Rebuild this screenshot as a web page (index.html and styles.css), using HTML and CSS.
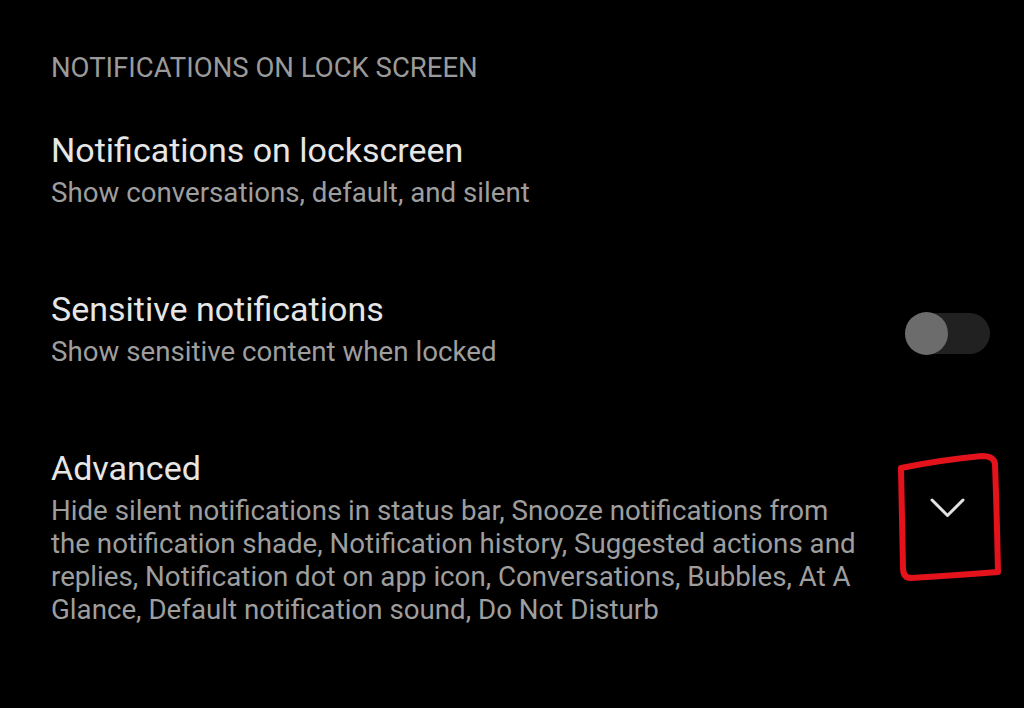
FILE: index.html
```html
<!DOCTYPE html>
<html lang="en">
<head>
    <meta charset="utf-8">
    <meta name="viewport" content="width=device-width, initial-scale=1.0">
    <title>Lock screen notifications</title>
    <link rel="stylesheet" href="styles.css">
</head>
<body>
    <div id="screen">
        <h2 class="category">NOTIFICATIONS ON LOCK SCREEN</h2>

        <div class="pref">
            <div class="text">
                <div class="title">Notifications on lockscreen</div>
                <div class="summary">Show conversations, default, and silent</div>
            </div>
        </div>

        <div class="pref">
            <div class="text">
                <div class="title">Sensitive notifications</div>
                <div class="summary">Show sensitive content when locked</div>
            </div>
            <div class="widget">
                <div class="switch">
                    <div class="thumb"></div>
                </div>
            </div>
        </div>

        <div class="pref">
            <div class="text">
                <div class="title">Advanced</div>
                <div class="summary">Hide silent notifications in status bar, Snooze notifications from the notification shade, Notification history, Suggested actions and replies, Notification dot on app icon, Conversations, Bubbles, At A Glance, Default notification sound, Do Not Disturb</div>
            </div>
            <div class="widget top">
                <svg class="chevron" width="37" height="22" viewBox="0 0 37 22">
                    <path d="M3 3 L18.5 18.5 L34 3" fill="none" stroke="#e2e2e2" stroke-width="3" stroke-linecap="round" stroke-linejoin="round"/>
                </svg>
            </div>
        </div>

        <!-- red marker drawn over the screenshot -->
        <svg class="marker" width="1024" height="708" viewBox="0 0 1024 708">
            <path d="M901 468 Q940 460 982 456 Q994 456 995 464 Q997 520 998 572 Q960 575 911 578 Q903 578 903 568 Q902 520 901 468"
                  fill="none" stroke="#e3121b" stroke-width="6" stroke-linecap="round" stroke-linejoin="round"/>
        </svg>
    </div>
</body>
</html>
```

FILE: styles.css
```css
body {
    margin: 0;
    background-color: #000;
    font-family: Roboto, "Noto Sans", sans-serif;
}
#screen {
    position: relative;
    width: 1024px;
    height: 708px;
    overflow: hidden;
    box-sizing: border-box;
    padding: 52px 34px 0 51px;
}
.category {
    margin: 0 0 46px 0;
    font-size: 27.5px;
    line-height: 32px;
    font-weight: 400;
    color: #9a9a9a;
}
.pref {
    display: flex;
    align-items: center;
    margin-bottom: 80px;
}
.text {
    width: 815px;
}
.title {
    font-size: 34px;
    line-height: 40px;
    color: #e6e6e6;
}
.summary {
    margin-top: 6px;
    font-size: 27.7px;
    line-height: 33px;
    color: #9e9e9e;
}
.widget {
    flex: 1;
    display: flex;
    justify-content: flex-end;
}
.widget.top {
    align-self: flex-start;
    margin-top: 49px;
    padding-right: 24px;
}
.switch {
    width: 85px;
    height: 41px;
    margin-top: 9px;
    border-radius: 21px;
    background-color: #212121;
    display: flex;
    align-items: center;
}
.thumb {
    width: 43px;
    height: 43px;
    flex-shrink: 0;
    border-radius: 50%;
    background-color: #6c6c6c;
}
.marker {
    position: absolute;
    left: 0;
    top: 0;
}
```
